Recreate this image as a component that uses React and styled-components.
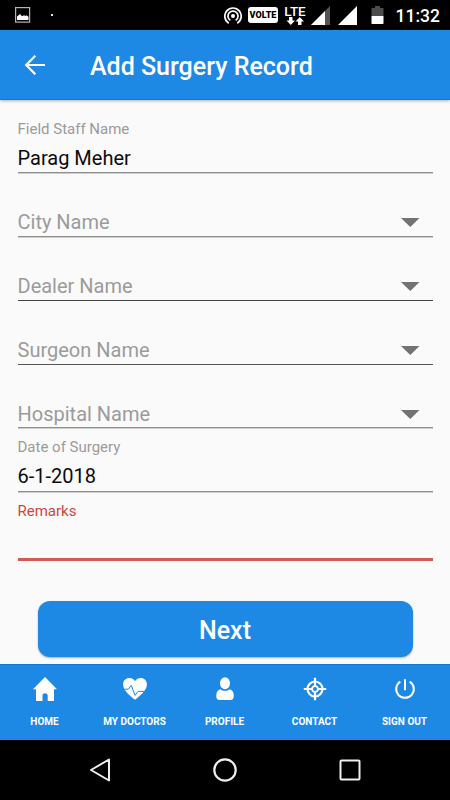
import React from "react";
import styled, { createGlobalStyle } from "styled-components";

const GlobalStyle = createGlobalStyle`
  * {
    box-sizing: border-box;
  }
  body {
    margin: 0;
    background: #fafafa;
    font-family: Roboto, sans-serif;
  }
`;

const Screen = styled.div`
  display: flex;
  flex-direction: column;
  width: 450px;
  height: 800px;
  overflow: hidden;
  background: #fafafa;
`;

const StatusBar = styled.div`
  display: flex;
  align-items: flex-start;
  flex: 0 0 30px;
  padding: 6px 0 0 15px;
  background: #000;
  color: #fff;
`;
const StatusItem = styled.div`
  display: flex;
  flex: 0 0 ${(props) => props.$width}px;
  margin-left: ${(props) => props.$gap || 0}px;
`;
const Dot = styled.span`
  width: 2px;
  height: 2px;
  margin-top: 8px;
  background: #ddd;
`;
const VolteBadge = styled.span`
  width: 30px;
  height: 16px;
  margin-top: 1px;
  border-radius: 3px;
  background: #fff;
  color: #000;
  font-size: 9px;
  font-weight: 900;
  line-height: 17px;
  text-align: center;
`;
const Lte = styled.div`
  display: flex;
  flex-direction: column;
  align-items: center;
  width: 22px;
  font-size: 13.5px;
  font-weight: 500;
  line-height: 11px;
`;
const Clock = styled.span`
  font-size: 17.5px;
  font-weight: 500;
  line-height: 20px;
  white-space: nowrap;
`;

const AppBar = styled.header`
  display: flex;
  align-items: center;
  flex: 0 0 70px;
  padding: 1px 0 0 23px;
  background: #1e88e5;
  border-bottom: 1px solid #1a78ca;
  box-shadow: 0 1px 3px rgba(0, 0, 0, 0.3);
`;
const Title = styled.h1`
  margin: 4px 0 0 43px;
  color: #fff;
  font-size: 25px;
  font-weight: 500;
  line-height: 30px;
`;

const Form = styled.form`
  display: flex;
  flex-direction: column;
  flex: 1;
  padding: 10px 17.5px 0 17.5px;
`;
const Field = styled.div`
  display: flex;
  flex-direction: column;
  height: ${(props) => props.$height || 64}px;
  padding-top: 10px;
  border-bottom: ${(props) => props.$border || "1px solid #8f8f8f"};
  box-shadow: ${(props) => (props.$crisp ? "none" : "0 1px 0 #cdcdcd")};
`;
const Label = styled.label`
  color: ${(props) => props.$color || "#9b9b9b"};
  font-size: 15px;
  line-height: 18px;
`;
const Value = styled.span`
  margin-top: 8px;
  color: #0c0c0c;
  font-size: 20px;
  line-height: 24px;
`;
const Select = styled.div`
  display: flex;
  align-items: center;
  justify-content: space-between;
  margin-top: 27px;
  padding-right: 13px;
  color: #9b9b9b;
  font-size: 20px;
  line-height: 24px;
`;
const NextButton = styled.button`
  height: 56px;
  margin: 40px 20px 0;
  padding: 3px 0 0;
  border: 0;
  border-radius: 12px;
  background: #1e88e5;
  box-shadow: 0 1px 2px rgba(0, 0, 0, 0.3);
  color: #fff;
  font-family: inherit;
  font-size: 25px;
  font-weight: 500;
`;

const TabBar = styled.nav`
  display: flex;
  flex: 0 0 76px;
  background: #1e88e5;
  border-top: 1px solid #1a78ca;
`;
const Tab = styled.div`
  display: flex;
  flex-direction: column;
  align-items: center;
  flex: 1;
  padding-top: 12px;
  color: #fff;
`;
const TabLabel = styled.span`
  margin: 13px 1px 0 0;
  font-size: 10px;
  font-weight: 700;
  line-height: 14px;
`;

const SystemNav = styled.div`
  display: flex;
  align-items: center;
  justify-content: space-between;
  flex: 0 0 60px;
  padding: 0 88px;
  background: #000;
`;

const HomeIcon = () => (
  <svg width="24" height="25" viewBox="0 0 24 25" fill="#fff">
    <path d="M12 0 24 12.3h-3V24h-6.3v-5.2a2.6 2.6 0 0 0-5.2 0V24H3V12.3H0Z" />
  </svg>
);
const HeartIcon = () => (
  <svg width="24" height="25" viewBox="0 0 24 25">
    <path
      d="M12 22.8C9 20 .1 14 .1 7.4.1 3.4 3 1.1 6.2 1.1c2.4 0 4.6 1.1 5.8 3.2 1.2-2.1 3.4-3.2 5.8-3.2 3.2 0 6.1 2.3 6.1 6.3C23.9 14 15 20 12 22.8Z"
      fill="#fff"
    />
    <path
      d="M1.5 12.2h3.8l3-3.8 3.800 10 3-4h6"
      fill="none"
      stroke="#1e88e5"
      strokeWidth="1"
    />
  </svg>
);
const ProfileIcon = () => (
  <svg width="24" height="25" viewBox="0 0 24 25" fill="#fff">
    <ellipse cx="12" cy="6.3" rx="5" ry="6" />
    <path d="M7.3 12.2c2.6 2.2 6.8 2.2 9.4 0 2.3.5 4 2.8 4 5.8v1.5c0 2.4-1.2 3.5-3.5 3.5H6.8c-2.3 0-3.5-1.1-3.5-3.5V18c0-3 1.700-5.300 4-5.800Z" />
  </svg>
);
const ContactIcon = () => (
  <svg
    width="24"
    height="25"
    viewBox="0 0 24 25"
    fill="none"
    stroke="#fff"
    strokeWidth="2.2"
  >
    <circle cx="12" cy="12" r="7.5" />
    <circle cx="12" cy="12" r="2.9" strokeWidth="1.8" />
    <path d="M12 .7V9M12 15v8.3M.8 12H9M15 12h8.2" />
  </svg>
);
const PowerIcon = () => (
  <svg
    width="24"
    height="25"
    viewBox="0 0 24 25"
    fill="none"
    stroke="#fff"
    strokeWidth="2"
  >
    <path d="M12 2.3v10.9M7.3 4.600a8.800 8.800 0 1 0 9.400 0" />
  </svg>
);

const ImageIcon = () => (
  <svg width="16" height="18" viewBox="0 0 16 18">
    <rect x=".6" y="1.6" width="14" height="14.500" fill="none" stroke="#b5b5b5" strokeWidth="1.200" />
    <path d="M2 14v-3.500l3-2.500 2 2.300 2-1 1.500.8 1-.8 2 1.500V14Z" fill="#fff" />
  </svg>
);
const HotspotIcon = () => (
  <svg width="18" height="20" viewBox="0 0 18 20" fill="none" stroke="#fff" strokeWidth="1.7">
    <circle cx="9" cy="10" r="2" fill="#fff" stroke="none" />
    <path d="M6.3 14.300a5 5 0 1 1 5.400 0M4.700 17.200a8.200 8.200 0 1 1 8.600 0" />
  </svg>
);
const DataArrows = () => (
  <svg width="18" height="8" viewBox="0 0 18 8" fill="#fff">
    <path d="M3 0h3.500v3.500h2.500L4.800 8 .5 3.500H3ZM12 8h3.500V4.500H18L13.800 0 9.500 4.500H12Z" />
  </svg>
);
const SignalIcon = ({ weak }) => (
  <svg width="19" height="19" viewBox="0 0 19 19">
    <path d="M0 19 19 0v19Z" fill={weak ? "#555" : "#fff"} />
    {weak && <path d="M0 19 14 5v14Z" fill="#fff" />}
  </svg>
);
const BatteryIcon = () => (
  <svg width="13" height="19" viewBox="0 0 13 19">
    <path d="M1 2h3V0h5v2h3l.5.5V10H.5V2.500Z" fill="#4c4c4c" />
    <path d="M.5 10h12v7.500l-.5.500H1l-.5-.5Z" fill="#fff" />
  </svg>
);
const BackArrow = () => (
  <svg width="24" height="22" viewBox="0 0 24 22" fill="none" stroke="#fff" strokeWidth="2.2">
    <path d="M22 11H4M12.3 1.800 3.200 11l9.100 9.200" />
  </svg>
);
const Caret = () => (
  <svg width="19" height="9" viewBox="0 0 19 9">
    <path d="M0 0h18.500L9.250 9Z" fill="#737373" />
  </svg>
);

const selects = [
  { name: "City Name", height: 64 },
  { name: "Dealer Name", height: 64, border: "1px solid #444", crisp: true },
  { name: "Surgeon Name", height: 64, border: "1px solid #555", crisp: true },
  { name: "Hospital Name", height: 63 },
];

const tabs = [
  { name: "HOME", Icon: HomeIcon },
  { name: "MY DOCTORS", Icon: HeartIcon },
  { name: "PROFILE", Icon: ProfileIcon },
  { name: "CONTACT", Icon: ContactIcon },
  { name: "SIGN OUT", Icon: PowerIcon },
];

const App = () => (
  <>
    <GlobalStyle />
    <Screen>
      <StatusBar>
        <StatusItem $width={16}>
          <ImageIcon />
        </StatusItem>
        <StatusItem $width={2} $gap={20}>
          <Dot />
        </StatusItem>
        <StatusItem $width={18} $gap={171}>
          <HotspotIcon />
        </StatusItem>
        <StatusItem $width={30} $gap={6}>
          <VolteBadge>VOLTE</VolteBadge>
        </StatusItem>
        <StatusItem $width={22} $gap={6}>
          <Lte>
            LTE
            <DataArrows />
          </Lte>
        </StatusItem>
        <StatusItem $width={19} $gap={5}>
          <SignalIcon weak />
        </StatusItem>
        <StatusItem $width={19} $gap={8}>
          <SignalIcon />
        </StatusItem>
        <StatusItem $width={13} $gap={14}>
          <BatteryIcon />
        </StatusItem>
        <StatusItem $width={46} $gap={11.5}>
          <Clock>11:32</Clock>
        </StatusItem>
      </StatusBar>
      <AppBar>
        <BackArrow />
        <Title>Add Surgery Record</Title>
      </AppBar>
      <Form>
        <Field $height={63}>
          <Label>Field Staff Name</Label>
          <Value>Parag Meher</Value>
        </Field>
        {selects.map((select) => (
          <Field
            key={select.name}
            $height={select.height}
            $border={select.border}
            $crisp={select.crisp}
          >
            <Select>
              {select.name}
              <Caret />
            </Select>
          </Field>
        ))}
        <Field>
          <Label>Date of Surgery</Label>
          <Value>6-1-2018</Value>
        </Field>
        <Field $height={69} $border="3px solid #d4594f" $crisp>
          <Label $color="#d0473f">Remarks</Label>
        </Field>
        <NextButton type="button">Next</NextButton>
      </Form>
      <TabBar>
        {tabs.map(({ name, Icon }) => (
          <Tab key={name}>
            <Icon />
            <TabLabel>{name}</TabLabel>
          </Tab>
        ))}
      </TabBar>
      <SystemNav>
        <svg width="24" height="26" viewBox="0 0 24 26">
          <path d="M21 2.500v21L3 13Z" fill="none" stroke="#eee" strokeWidth="2" strokeLinejoin="round" />
        </svg>
        <svg width="26" height="26" viewBox="0 0 26 26">
          <circle cx="13" cy="13" r="10.7" fill="none" stroke="#eee" strokeWidth="2.2" />
        </svg>
        <svg width="24" height="24" viewBox="0 0 24 24">
          <rect x="2.5" y="2.5" width="19" height="19" rx="1" fill="none" stroke="#eee" strokeWidth="2" />
        </svg>
      </SystemNav>
    </Screen>
  </>
);

export default App;
